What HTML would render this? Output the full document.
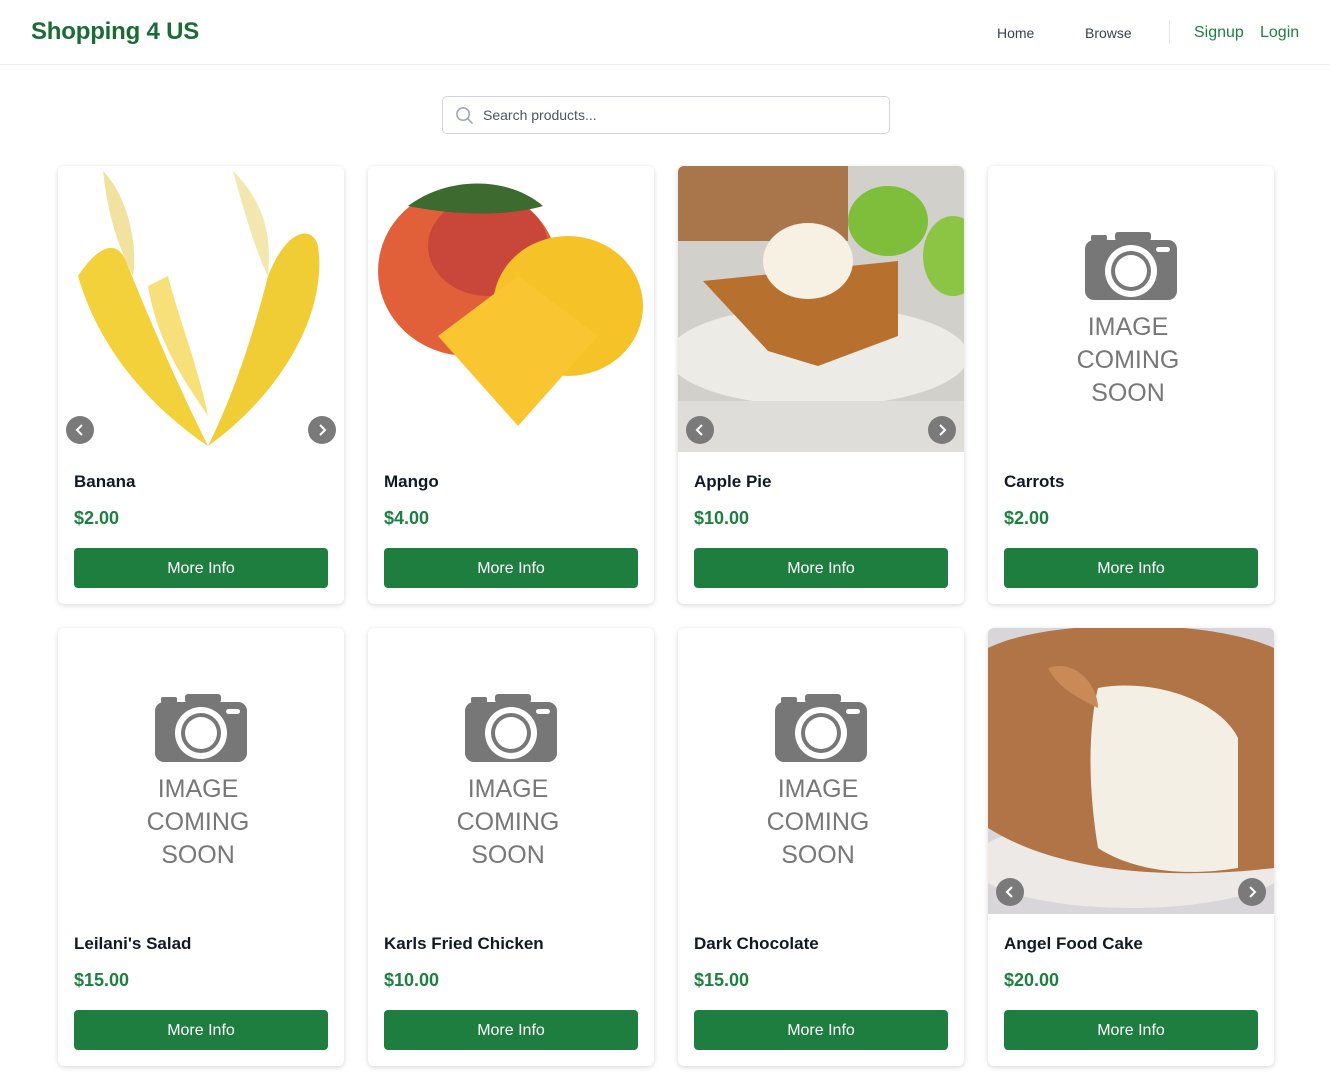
<!DOCTYPE html>
<html><head><meta charset="utf-8"><style>
*{margin:0;padding:0;box-sizing:border-box}
body{width:1330px;height:1072px;background:#fff;font-family:"Liberation Sans",Arial,sans-serif;position:relative;overflow:hidden}
.hdr{position:absolute;left:0;top:0;width:1330px;height:65px;border-bottom:1px solid #eeeeee}
.logo{position:absolute;left:31px;top:18px;font-size:24px;font-weight:bold;color:#1a6b34;letter-spacing:-0.2px}
.nav{position:absolute;top:25px;font-size:14px;color:#374151}
.nav.g{color:#1e8040;font-size:16px;top:24px}
.div{position:absolute;left:1169px;top:20px;width:1px;height:24px;background:#e5e7eb}
.search{position:absolute;left:442px;top:96px;width:448px;height:38px;border:1px solid #d1d5db;border-radius:5px}
.search span{position:absolute;left:40px;top:10px;font-size:14px;color:#4b5563}
.card{position:absolute;width:286px;height:438px;border-radius:6px;background:#fff;box-shadow:0 1px 4px rgba(0,0,0,.12),0 2px 8px rgba(0,0,0,.05);overflow:hidden}
.img{position:absolute;left:0;top:0;width:286px;height:286px;overflow:hidden}
.t{position:absolute;left:16px;top:306px;font-size:17px;font-weight:bold;color:#111827}
.p{position:absolute;left:16px;top:342px;font-size:18px;font-weight:bold;color:#1e8040}
.b{position:absolute;left:16px;top:382px;width:254px;height:40px;border-radius:4px;background:#1e7e40;color:#fff;font-size:16px;text-align:center;line-height:41px}
.arr{position:absolute;top:250px;width:28px;height:28px;border-radius:50%;background:#7a7a7a}
.arr svg{position:absolute;left:7px;top:7px}
.soon{position:absolute;left:0;top:0;width:286px;height:286px}
.soon .cam{position:absolute;left:97px;top:66px}
.soon .tx{position:absolute;left:-3px;width:286px;top:145px;text-align:center;font-size:25px;line-height:33px;color:#777}
</style></head><body>
<div class="hdr">
<div class="logo">Shopping 4 US</div>
<div class="nav" style="left:997px">Home</div>
<div class="nav" style="left:1085px">Browse</div>
<div class="div"></div>
<div class="nav g" style="left:1194px">Signup</div>
<div class="nav g" style="left:1260px">Login</div>
</div>
<div class="search"><svg style="position:absolute;left:12px;top:9px" width="19" height="19" viewBox="0 0 20 20"><circle cx="8.5" cy="8.5" r="6.5" fill="none" stroke="#9ca3af" stroke-width="1.6"/><path d="M13.3 13.3L18 18" stroke="#9ca3af" stroke-width="1.6" stroke-linecap="round"/></svg><span>Search products...</span></div>

<div class="card" style="left:58px;top:166px">
<div class="img"><svg width="286" height="286"><rect width="286" height="286" fill="#fff"/>
<path d="M20 110 C40 180 90 240 150 280 C120 220 90 150 70 100 C60 70 40 80 20 110Z" fill="#f2d13a"/>
<path d="M260 80 C270 150 220 230 150 280 C180 220 200 150 210 110 C230 60 255 60 260 80Z" fill="#f0cd34"/>
<path d="M90 120 C100 180 130 220 150 250 C140 200 120 150 110 110Z" fill="#f7e07a"/>
<path d="M175 5 C200 30 215 60 210 110 C200 90 190 60 175 5Z" fill="#f3e7b0"/>
<path d="M45 5 C70 30 80 80 75 110 C60 80 50 50 45 5Z" fill="#f1e2a0"/>
</svg></div>
<div class="arr" style="left:8px"><svg width="14" height="14"><path d="M9 2L4 7l5 5" fill="none" stroke="#fff" stroke-width="2"/></svg></div>
<div class="arr" style="left:250px"><svg width="14" height="14"><path d="M5 2l5 5-5 5" fill="none" stroke="#fff" stroke-width="2"/></svg></div>
<div class="t">Banana</div><div class="p">$2.00</div><div class="b">More Info</div></div>

<div class="card" style="left:368px;top:166px">
<div class="img"><svg width="286" height="286"><rect width="286" height="286" fill="#fff"/>
<ellipse cx="100" cy="105" rx="90" ry="85" fill="#e1603a"/>
<ellipse cx="120" cy="80" rx="60" ry="50" fill="#c9473a"/>
<ellipse cx="200" cy="140" rx="75" ry="70" fill="#f5c228"/>
<path d="M70 170 L150 110 L230 170 L150 260Z" fill="#f9c531"/>
<path d="M40 40 C80 10 140 10 175 40 C140 50 90 50 40 40Z" fill="#3d6a2f"/>
</svg></div>
<div class="t">Mango</div><div class="p">$4.00</div><div class="b">More Info</div></div>

<div class="card" style="left:678px;top:166px">
<div class="img"><svg width="286" height="286"><rect width="286" height="286" fill="#d2d0cb"/>
<rect width="170" height="75" fill="#a8764a"/>
<ellipse cx="210" cy="55" rx="40" ry="35" fill="#7fbe3a"/>
<ellipse cx="275" cy="90" rx="30" ry="40" fill="#8cc443"/>
<ellipse cx="140" cy="190" rx="150" ry="50" fill="#ecebe6"/>
<path d="M25 115 L220 95 L220 170 L140 200 L90 185Z" fill="#b8702e"/>
<ellipse cx="130" cy="95" rx="45" ry="38" fill="#f6f1e2"/>
<rect y="235" width="286" height="51" fill="#deddda"/>
</svg></div>
<div class="arr" style="left:8px"><svg width="14" height="14"><path d="M9 2L4 7l5 5" fill="none" stroke="#fff" stroke-width="2"/></svg></div>
<div class="arr" style="left:250px"><svg width="14" height="14"><path d="M5 2l5 5-5 5" fill="none" stroke="#fff" stroke-width="2"/></svg></div>
<div class="t">Apple Pie</div><div class="p">$10.00</div><div class="b">More Info</div></div>

<div class="card" style="left:988px;top:166px">
<div class="soon"><svg class="cam" width="92" height="68" viewBox="0 0 92 68"><rect x="6" y="3" width="16" height="6" rx="2" fill="#777"/><rect x="30" y="0" width="36" height="9" rx="3" fill="#777"/><rect x="0" y="8" width="92" height="60" rx="9" fill="#777"/><circle cx="46" cy="39" r="26" fill="#fff"/><circle cx="46" cy="39" r="20" fill="#777"/><circle cx="46" cy="39" r="16" fill="#fff"/><rect x="71" y="15" width="14" height="5" rx="2.5" fill="#fff"/></svg><div class="tx">IMAGE<br>COMING<br>SOON</div></div>
<div class="t">Carrots</div><div class="p">$2.00</div><div class="b">More Info</div></div>

<div class="card" style="left:58px;top:628px">
<div class="soon"><svg class="cam" width="92" height="68" viewBox="0 0 92 68"><rect x="6" y="3" width="16" height="6" rx="2" fill="#777"/><rect x="30" y="0" width="36" height="9" rx="3" fill="#777"/><rect x="0" y="8" width="92" height="60" rx="9" fill="#777"/><circle cx="46" cy="39" r="26" fill="#fff"/><circle cx="46" cy="39" r="20" fill="#777"/><circle cx="46" cy="39" r="16" fill="#fff"/><rect x="71" y="15" width="14" height="5" rx="2.5" fill="#fff"/></svg><div class="tx">IMAGE<br>COMING<br>SOON</div></div>
<div class="t">Leilani's Salad</div><div class="p">$15.00</div><div class="b">More Info</div></div>

<div class="card" style="left:368px;top:628px">
<div class="soon"><svg class="cam" width="92" height="68" viewBox="0 0 92 68"><rect x="6" y="3" width="16" height="6" rx="2" fill="#777"/><rect x="30" y="0" width="36" height="9" rx="3" fill="#777"/><rect x="0" y="8" width="92" height="60" rx="9" fill="#777"/><circle cx="46" cy="39" r="26" fill="#fff"/><circle cx="46" cy="39" r="20" fill="#777"/><circle cx="46" cy="39" r="16" fill="#fff"/><rect x="71" y="15" width="14" height="5" rx="2.5" fill="#fff"/></svg><div class="tx">IMAGE<br>COMING<br>SOON</div></div>
<div class="t">Karls Fried Chicken</div><div class="p">$10.00</div><div class="b">More Info</div></div>

<div class="card" style="left:678px;top:628px">
<div class="soon"><svg class="cam" width="92" height="68" viewBox="0 0 92 68"><rect x="6" y="3" width="16" height="6" rx="2" fill="#777"/><rect x="30" y="0" width="36" height="9" rx="3" fill="#777"/><rect x="0" y="8" width="92" height="60" rx="9" fill="#777"/><circle cx="46" cy="39" r="26" fill="#fff"/><circle cx="46" cy="39" r="20" fill="#777"/><circle cx="46" cy="39" r="16" fill="#fff"/><rect x="71" y="15" width="14" height="5" rx="2.5" fill="#fff"/></svg><div class="tx">IMAGE<br>COMING<br>SOON</div></div>
<div class="t">Dark Chocolate</div><div class="p">$15.00</div><div class="b">More Info</div></div>

<div class="card" style="left:988px;top:628px">
<div class="img"><svg width="286" height="286"><rect width="286" height="286" fill="#d8d6d8"/>
<ellipse cx="143" cy="235" rx="160" ry="45" fill="#ece9e6"/>
<path d="M0 20 C60 -10 220 -10 286 20 L286 240 C200 250 80 250 0 200Z" fill="#b07446"/>
<path d="M110 60 C160 50 230 70 250 110 L250 240 C190 250 140 240 110 220 C100 160 100 100 110 60Z" fill="#f4efe4"/>
<path d="M60 40 C90 30 110 60 110 80 C90 70 70 60 60 40Z" fill="#c98a58"/>
</svg></div>
<div class="arr" style="left:8px"><svg width="14" height="14"><path d="M9 2L4 7l5 5" fill="none" stroke="#fff" stroke-width="2"/></svg></div>
<div class="arr" style="left:250px"><svg width="14" height="14"><path d="M5 2l5 5-5 5" fill="none" stroke="#fff" stroke-width="2"/></svg></div>
<div class="t">Angel Food Cake</div><div class="p">$20.00</div><div class="b">More Info</div></div>
</body></html>
